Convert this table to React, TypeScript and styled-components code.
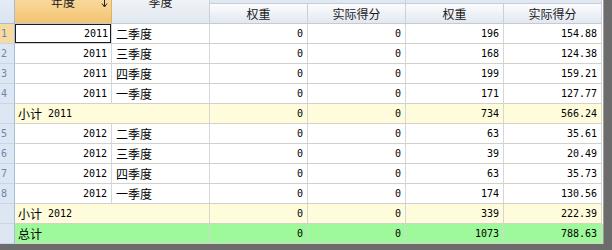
import React, { Fragment } from "react";
import styled, { createGlobalStyle, css } from "styled-components";

// grid columns: row indicator, 年度, 季度, 权重, 实际得分, 权重, 实际得分
const COLS = "15px 97px 98px 98px 98px 98px 98px";
const CJK = `"Noto Sans CJK SC", "Noto Sans", sans-serif`;
const MONO = `"DejaVu Sans Mono", "Liberation Mono", monospace`;

type Line = [string, string, string, string, string];

const groups: { year: string; rows: Line[]; sub: string[] }[] = [
  {
    year: "2011",
    rows: [
      ["二季度", "0", "0", "196", "154.88"],
      ["三季度", "0", "0", "168", "124.38"],
      ["四季度", "0", "0", "199", "159.21"],
      ["一季度", "0", "0", "171", "127.77"],
    ],
    sub: ["0", "0", "734", "566.24"],
  },
  {
    year: "2012",
    rows: [
      ["二季度", "0", "0", "63", "35.61"],
      ["三季度", "0", "0", "39", "20.49"],
      ["四季度", "0", "0", "63", "35.73"],
      ["一季度", "0", "0", "174", "130.56"],
    ],
    sub: ["0", "0", "339", "222.39"],
  },
];
const total = ["0", "0", "1073", "788.63"];

const SortArrow = () => (
  <ArrowBox width="7" height="13" viewBox="0 0 7 13">
    <path d="M3.5 0 V11" stroke="#222" strokeWidth="1" fill="none" />
    <path d="M1 8.5 L3.5 12 L6 8.5" stroke="#222" strokeWidth="1" fill="none" />
  </ArrowBox>
);

export default function App() {
  let n = 0;
  return (
    <Fragment>
      <GlobalStyle />
      <Viewport>
        <Sheet>
          <Header>
            <Corner />
            <HeadCell $active $tall>
              年度
              <SortArrow />
            </HeadCell>
            <HeadCell $tall>季度</HeadCell>
            <Band $col={4} />
            <Band $col={6} />
            <HeadCell>权重</HeadCell>
            <HeadCell>实际得分</HeadCell>
            <HeadCell>权重</HeadCell>
            <HeadCell>实际得分</HeadCell>
          </Header>

          {groups.map((g) => (
            <Fragment key={g.year}>
              {g.rows.map((r) => {
                n += 1;
                const first = n === 1;
                return (
                  <Row key={n}>
                    <Indicator $active={first}>{n}</Indicator>
                    <Cell $num $focus={first}>
                      {g.year}
                    </Cell>
                    <Cell>{r[0]}</Cell>
                    {r.slice(1).map((v, i) => (
                      <Cell $num key={i}>
                        {v}
                      </Cell>
                    ))}
                  </Row>
                );
              })}
              <Row $tone="sub">
                <Indicator />
                <LabelCell>
                  小计 <Digits>{g.year}</Digits>
                </LabelCell>
                {g.sub.map((v, i) => (
                  <Cell $num key={i}>
                    {v}
                  </Cell>
                ))}
              </Row>
            </Fragment>
          ))}

          <Row $tone="total">
            <Indicator />
            <LabelCell>总计</LabelCell>
            {total.map((v, i) => (
              <Cell $num key={i}>
                {v}
              </Cell>
            ))}
          </Row>
        </Sheet>
      </Viewport>
    </Fragment>
  );
}

const GlobalStyle = createGlobalStyle`
  html, body {
    margin: 0;
    padding: 0;
    background: #6c6c6c;
  }
  * {
    box-sizing: border-box;
  }
`;

//the sheet is scrolled down a little: top band header is cut off
const Viewport = styled.div`
  width: 604px;
  height: 244px;
  overflow: hidden;
  background: #ffffff;
  border-right: 1px solid #9c9c9c;
`;

const Sheet = styled.div`
  margin-top: -20px;
`;

const Header = styled.div`
  display: grid;
  grid-template-columns: ${COLS};
  grid-template-rows: 24px 20px;
`;

const Corner = styled.div`
  grid-row: 1 / span 2;
  background: linear-gradient(#eef3f9, #d9e4f1);
  border-right: 1px solid #a6bbd5;
  border-bottom: 1px solid #a6bbd5;
`;

const HeadCell = styled.div<{ $active?: boolean; $tall?: boolean }>`
  position: relative;
  display: flex;
  align-items: center;
  justify-content: center;
  font-family: ${CJK};
  font-size: 12px;
  color: #1a1a1a;
  background: linear-gradient(#fbfcfe, #e2e8f0);
  border-right: 1px solid #c7d0dc;
  border-bottom: 1px solid #c5cbd3;
  ${(p) => p.$tall && css`grid-row: 1 / span 2;`}
  ${(p) =>
    p.$active &&
    css`
      background: linear-gradient(#fde9c6, #f9d699 50%, #f3c470);
      border-right-color: #e0b05c;
    `}
`;

const ArrowBox = styled.svg`
  position: absolute;
  right: 3px;
  top: 15px;
`;

const Band = styled.div<{ $col: number }>`
  grid-row: 1;
  grid-column: ${(p) => p.$col} / span 2;
  background: linear-gradient(#fbfcfe, #dfe6ef);
  border-right: 1px solid #c7d0dc;
  border-bottom: 1px solid #c5cfdc;
`;

const tones = {
  plain: "#ffffff",
  sub: "#fffcdc",
  total: "#9ef99a",
};

const Row = styled.div<{ $tone?: keyof typeof tones }>`
  display: grid;
  grid-template-columns: ${COLS};
  height: 20px;
  background: ${(p) => tones[p.$tone || "plain"]};
`;

const Indicator = styled.div<{ $active?: boolean }>`
  display: flex;
  align-items: center;
  padding-left: 1px;
  font-family: ${MONO};
  font-size: 10px;
  color: #6a86ab;
  background: ${(p) => (p.$active ? "#f7d9a2" : "#dde7f3")};
  border-right: 1px solid #a6bbd5;
  border-bottom: 1px solid #c9d6e6;
`;

const Cell = styled.div<{ $num?: boolean; $focus?: boolean }>`
  display: flex;
  align-items: center;
  justify-content: ${(p) => (p.$num ? "flex-end" : "flex-start")};
  padding: 0 4px;
  font-family: ${(p) => (p.$num ? MONO : CJK)};
  font-size: ${(p) => (p.$num ? "10px" : "12px")};
  color: #000;
  border-right: 1px solid #d6d6d6;
  border-bottom: 1px solid #d3d1cb;
  white-space: pre;
  ${(p) =>
    p.$focus &&
    css`
      padding-right: 3px;
      box-shadow: inset 0 0 0 1px #1c1c1c;
    `}
`;

const LabelCell = styled.div`
  grid-column: span 2;
  display: flex;
  align-items: center;
  gap: 6px;
  padding-left: 3px;
  font-family: ${CJK};
  font-size: 12px;
  color: #000;
  border-right: 1px solid #d6d6d6;
  border-bottom: 1px solid #d3d1cb;
`;

const Digits = styled.span`
  font-family: ${MONO};
  font-size: 10px;
`;
